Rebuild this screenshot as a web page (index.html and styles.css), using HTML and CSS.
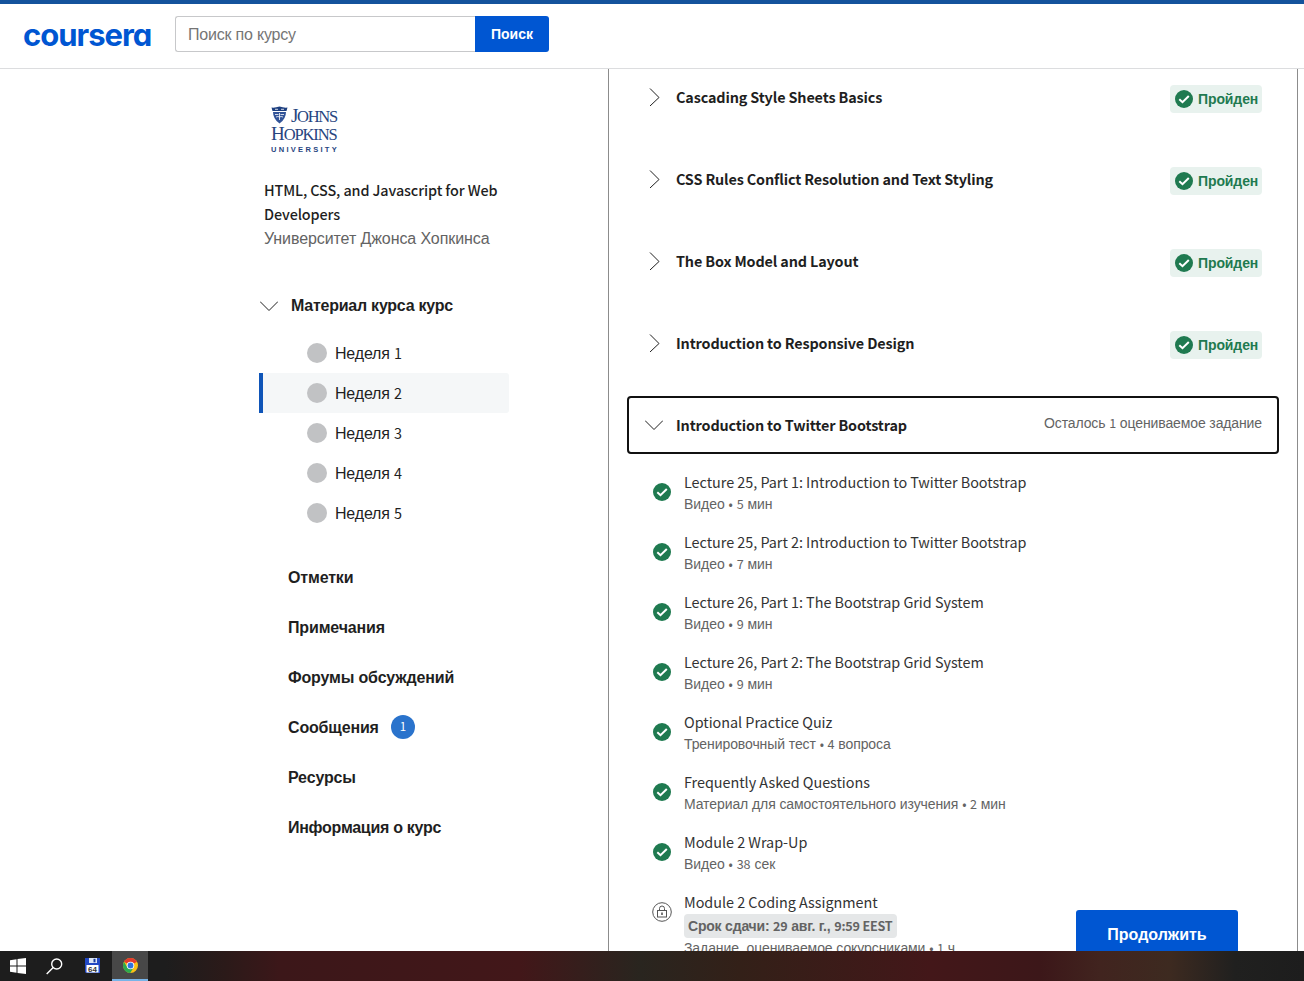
FILE: index.html
```html
<!DOCTYPE html>
<html lang="ru">
<head>
<meta charset="utf-8">
<title>Coursera</title>
<link rel="stylesheet" href="styles.css">
</head>
<body>
<svg width="0" height="0" class="defs">
  <symbol id="done" viewBox="0 0 18 18"><circle cx="9" cy="9" r="9" fill="#1f7a50"/><path d="M4.3 9.2 L7.5 12.2 L13.8 6" fill="none" stroke="#fff" stroke-width="2"/></symbol>
  <symbol id="right" viewBox="0 0 18 18"><path d="M4 .5 L13 9.500 L4 18" fill="none" stroke="#1f1f1f" stroke-width="1"/></symbol>
  <symbol id="down" viewBox="0 0 18 18"><path d="M0 4.5 L9 13.5 L18 4.5" fill="none" stroke="#1f1f1f" stroke-width="1"/></symbol>
</svg>
<header class="header">
  <div class="logo">coursera</div>
  <div class="search"><div class="search-field">Поиск по курсу</div><div class="search-button">Поиск</div></div>
</header>
<div class="page">
  <aside class="sidebar">
    <div class="university">
      <div class="uni-top"><svg width="17" height="18" viewBox="0 0 17 18"><path d="M.5 1.5 Q4 2 8.5 .5 Q13 2 16.5 1.5 L15.5 5 H1.500Z" fill="#1d3f80"/><path d="M2 6 H15 Q15 13 8.500 17.500 Q2 13 2 6Z" fill="#315398"/><path d="M4 3.300 H7 M10 3.300 H13 M4 8.500 H7.500 M9.500 8.500 H13 M5 11 Q7 10 8.500 11 Q10 10 12 11 M8.500 7 V14" stroke="#fff" fill="none" stroke-width=".8"/></svg><span>J<small>OHNS</small></span></div>
      <div class="uni-mid">H<small>OPKINS</small></div>
      <div class="uni-low">UNIVERSITY</div>
    </div>
    <div class="course"><div class="src">HTML, CSS, and Javascript for Web<br>Developers</div><div class="school">Университет Джонса Хопкинса</div></div>
    <div class="material"><svg width="18" height="18"><use href="#down"/></svg><span>Материал курса курс</span></div>
    <ul class="weeks">
      <li><i></i><span>Неделя <b class="lat">1</b></span></li>
      <li class="active"><i></i><span>Неделя <b class="lat">2</b></span></li>
      <li><i></i><span>Неделя <b class="lat">3</b></span></li>
      <li><i></i><span>Неделя <b class="lat">4</b></span></li>
      <li><i></i><span>Неделя <b class="lat">5</b></span></li>
    </ul>
    <nav class="links">
      <div>Отметки</div><div>Примечания</div><div>Форумы обсуждений</div>
      <div>Сообщения <span class="count">1</span></div>
      <div>Ресурсы</div><div class="info">Информация о курс</div>
    </nav>
  </aside>
  <main class="panel">
    <section class="module"><svg width="18" height="18"><use href="#right"/></svg><h2>Cascading Style Sheets Basics</h2><div class="badge"><svg width="18" height="18"><use href="#done"/></svg><span>Пройден</span></div></section>
    <section class="module"><svg width="18" height="18"><use href="#right"/></svg><h2>CSS Rules Conflict Resolution and Text Styling</h2><div class="badge"><svg width="18" height="18"><use href="#done"/></svg><span>Пройден</span></div></section>
    <section class="module"><svg width="18" height="18"><use href="#right"/></svg><h2>The Box Model and Layout</h2><div class="badge"><svg width="18" height="18"><use href="#done"/></svg><span>Пройден</span></div></section>
    <section class="module"><svg width="18" height="18"><use href="#right"/></svg><h2>Introduction to Responsive Design</h2><div class="badge"><svg width="18" height="18"><use href="#done"/></svg><span>Пройден</span></div></section>
    <section class="module focused"><svg width="18" height="18"><use href="#down"/></svg><h2>Introduction to Twitter Bootstrap</h2><div class="left">Осталось <b class="lat">1</b> оцениваемое задание</div></section>
    <ul class="items">
      <li><svg width="18" height="18"><use href="#done"/></svg><div><h3>Lecture 25, Part 1: Introduction to Twitter Bootstrap</h3><p>Видео <b class="lat">• 5</b> мин</p></div></li>
      <li><svg width="18" height="18"><use href="#done"/></svg><div><h3>Lecture 25, Part 2: Introduction to Twitter Bootstrap</h3><p>Видео <b class="lat">• 7</b> мин</p></div></li>
      <li><svg width="18" height="18"><use href="#done"/></svg><div><h3>Lecture 26, Part 1: The Bootstrap Grid System</h3><p>Видео <b class="lat">• 9</b> мин</p></div></li>
      <li><svg width="18" height="18"><use href="#done"/></svg><div><h3>Lecture 26, Part 2: The Bootstrap Grid System</h3><p>Видео <b class="lat">• 9</b> мин</p></div></li>
      <li><svg width="18" height="18"><use href="#done"/></svg><div><h3>Optional Practice Quiz</h3><p class="reading">Тренировочный тест <b class="lat">• 4</b> вопроса</p></div></li>
      <li><svg width="18" height="18"><use href="#done"/></svg><div><h3>Frequently Asked Questions</h3><p class="reading">Материал для самостоятельного изучения <b class="lat">• 2</b> мин</p></div></li>
      <li><svg width="18" height="18"><use href="#done"/></svg><div><h3>Module 2 Wrap-Up</h3><p>Видео <b class="lat">• 38</b> сек</p></div></li>
      <li><svg width="20" height="20" viewBox="0 0 20 20" class="lock" fill="none" stroke="#555"><circle cx="10" cy="10" r="9.300"/><rect x="5.500" y="8.500" width="9" height="6.500"/><path d="M7.500 8.500 V6.500 A2.500 2.500 0 0 1 12.500 6.500 V8.500"/><path d="M10 10.500 V13" stroke-width="1.600"/></svg><div><h3>Module 2 Coding Assignment</h3><div class="due">Срок сдачи: <span class="lat">29</span> авг. г., <span class="lat">9:59 EEST</span></div><p class="reading">Задание, оцениваемое сокурсниками <b class="lat">• 1</b> ч</p></div></li>
    </ul>
    <div class="continue">Продолжить</div>
  </main>
</div>
<footer class="taskbar">
  <div class="task"><svg width="16" height="16" viewBox="0 0 16 16" fill="#fff"><path d="M0 2.300 L6.500 1.300 V7.500 H0Z M7.500 1.100 L16 0 V7.500 H7.500Z M0 8.500 H6.500 V14.700 L0 13.700Z M7.500 8.500 H16 V16 L7.500 14.900Z"/></svg></div>
  <div class="task"><svg width="17" height="17" viewBox="0 0 17 17" fill="none" stroke="#fff" stroke-width="1.400"><circle cx="10.700" cy="6" r="5"/><path d="M7.200 9.600 L.7 16"/></svg></div>
  <div class="task"><svg width="15" height="16" viewBox="0 0 15 16"><path d="M0 0 H15 V15 H1 L0 14Z" fill="#2349c4"/><rect x="4" width="8" height="5" fill="#dce6f5"/><rect x="8.500" y=".8" width="2" height="3.500" fill="#173a9e"/><rect x="1.500" y="7" width="12" height="7.500" fill="#fff"/><text x="7.500" y="13.600" class="disk">64</text></svg></div>
  <div class="task current"><svg width="15" height="15" viewBox="0 0 30 30"><circle cx="15" cy="15" r="15" fill="#fbc116"/><path d="M15 15 L2 7.500 A15 15 0 0 1 28 7.500Z" fill="#e33b2e"/><path d="M2 7.500 A15 15 0 0 0 14.500 30 L21.500 18.500 L15 15 L8.500 18.500Z" fill="#2da94f"/><circle cx="15" cy="15" r="7.500" fill="#fff"/><circle cx="15" cy="15" r="5.800" fill="#2f73e0"/></svg></div>
</footer>
</body>
</html>
```
FILE: styles.css
```css
* { box-sizing: border-box; }
body { margin: 0; width: 1304px; height: 981px; overflow: hidden; display: flex; flex-direction: column; background: #fff; color: #1f1f1f; font: 16px "Liberation Sans", Arial, sans-serif; }
svg { flex: none; display: block; }
.defs { position: absolute; }
ul, h2, h3, p { margin: 0; padding: 0; list-style: none; }
.lat, .src, h2, h3 { font-family: "Noto Sans CJK JP", "Liberation Sans", sans-serif; }
b.lat { font-weight: 400; }
.lat { font-size: .9em; line-height: 1; }

.header { flex: none; height: 69px; border-top: 4px solid #14539c; border-bottom: 1px solid #dcdddf; display: flex; padding: 12px 0 0 23px; }
.logo { width: 152px; height: 36px; font: 700 31px/38px Inter, sans-serif; font-feature-settings: "cv11"; letter-spacing: -1px; color: #0056d2; }
.search { display: flex; height: 36px; }
.search-field { width: 300px; border: 1px solid #c7c8ca; border-right: 0; border-radius: 3px 0 0 3px; padding-left: 12px; line-height: 35px; color: #757575; letter-spacing: -.2px; }
.search-button { width: 74px; background: #0056d2; color: #fff; font-weight: 700; font-size: 14px; line-height: 36px; text-align: center; border-radius: 0 3px 3px 0; }

.page { flex: none; height: 882px; display: flex; overflow: hidden; }
.sidebar { width: 608px; padding: 36px 0 0 259px; }
.university { width: 70px; height: 50px; margin-left: 11px; color: #27457f; font-family: "Liberation Serif", serif; white-space: nowrap; }
.uni-top { display: flex; gap: 3px; height: 20px; font-size: 19px; line-height: 20px; padding: 1px 0 0 1px; letter-spacing: -1.300px; }
.uni-mid { font-size: 19px; line-height: 17px; height: 19px; padding-left: 1px; letter-spacing: -1.100px; }
.university small { font-size: 16.500px; }
.uni-low { font: 700 7.500px/11px "Liberation Sans", sans-serif; letter-spacing: 2.300px; padding-left: 1px; }
.course { padding: 24px 0 0 5px; line-height: 24px; }
.src { font-size: 14.400px; font-weight: 500; height: 48px; margin-top: -1px; margin-bottom: 1px; letter-spacing: -.11px; }
.school { color: #636363; letter-spacing: -.09px; }
.material { display: flex; align-items: center; gap: 13px; height: 24px; margin-top: 43px; padding-left: 1px; font-weight: 700; letter-spacing: -.24px; }
.weeks { margin-top: 15px; width: 250px; }
.weeks li { height: 40px; display: flex; align-items: center; gap: 8px; padding-left: 48px; }
.weeks span { padding-top: 2px; letter-spacing: -.18px; }
.weeks i { width: 20px; height: 20px; border-radius: 50%; background: #c1c2c4; }
.weeks .active { background: #f5f7f8; border-left: 4px solid #0f55b8; padding-left: 44px; border-radius: 0 3px 3px 0; }
.links { padding: 20px 0 0 29px; font-weight: 700; letter-spacing: -.16px; }
.links div { height: 50px; display: flex; align-items: center; gap: 12px; }
.links .info { letter-spacing: -.28px; }
.count { width: 24px; height: 24px; margin-top: -2px; border-radius: 50%; background: #2a73cc; color: #fff; text-align: center; font: 11.500px/23px "Noto Sans CJK JP", sans-serif; }

.panel { position: relative; width: 690px; border-left: 1px solid #8c8c8c; border-right: 1px solid #8c8c8c; padding: 0 18px; }
.module { height: 58px; margin: -1px 0 25px; padding: 0 17px 0 19px; display: flex; align-items: center; }
.module h2 { margin-left: 12px; flex: 1; font-size: 14.400px; line-height: 24px; font-weight: 700; letter-spacing: -.14px; }
.badge { width: 92px; height: 28px; margin-top: 3px; padding-left: 5px; display: flex; align-items: center; gap: 5px; background: #e8f2ee; border-radius: 4px; color: #1f7a50; font-weight: 700; font-size: 14px; letter-spacing: -.1px; }
.focused { height: 58px; margin-bottom: 0; border: 2px solid #111; border-radius: 4px; padding: 0 15px 0 16px; }
.focused h2 { margin-left: 13px; }
.left { font-size: 14px; color: #636363; padding-bottom: 4px; letter-spacing: -.12px; }
.items { padding: 16px 0 0 26px; }
.items li { height: 60px; display: flex; gap: 13px; }
.items li > svg { margin-top: 13px; }
.items .lock { margin: 12px -1px 0; }
.items h3 { font-size: 14.400px; font-weight: 400; line-height: 24px; height: 24px; color: #333; letter-spacing: -.03px; white-space: nowrap; }
.items p { font-size: 14px; line-height: 20px; color: #636363; white-space: nowrap; letter-spacing: -.03px; }
.items .reading { letter-spacing: -.09px; }
.items .lat { word-spacing: 1px; }
.due { display: block; width: max-content; height: 24px; line-height: 24px; padding: 0 4px; background: #e5e7e8; border-radius: 4px; font-size: 14px; font-weight: 700; color: #636363; letter-spacing: -.2px; }
.due .lat { word-spacing: 0; }
.continue { position: absolute; left: 467px; top: 841px; width: 162px; height: 48px; border-radius: 3px; background: #0056d2; color: #fff; font-weight: 700; line-height: 50px; text-align: center; }

.taskbar { height: 30px; display: flex; background: linear-gradient(90deg, #1d1d1d 0, #1d1d1d 165px, #2b1a19 225px, #3c1719 280px, #421719 520px, #29251f 640px, #332018 740px, #431719 930px, #3c1719 1040px, #41241f 1100px, #3d2a20 1170px, #20201f 1235px, #1d1d1d 100%); }
.task { width: 36px; display: flex; align-items: center; justify-content: center; }
.task:nth-child(3) { margin-left: 2px; width: 38px; padding-right: 2px; }
.current { background: #484848; border-bottom: 2px solid #78b4e8; }
.disk { font: 700 8px "Liberation Sans", sans-serif; text-anchor: middle; fill: #333; }
```
